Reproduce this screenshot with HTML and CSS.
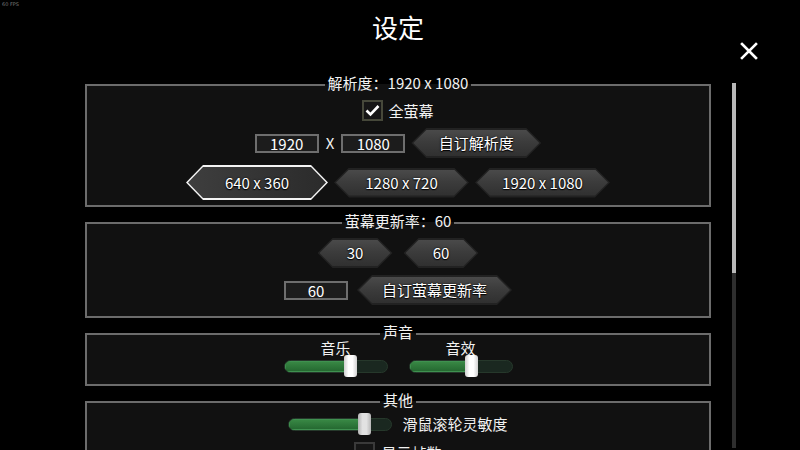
FILE: index.html
```html
<!DOCTYPE html>
<html lang="zh-CN">
<head>
<meta charset="utf-8">
<title>设定</title>
<link rel="stylesheet" href="styles.css">
</head>
<body>
<div class="fps">60 FPS</div>
<button class="close" aria-label="关闭">
  <svg width="18" height="18" viewBox="0 0 18 18"><path d="M2 2L16 16M16 2L2 16" stroke="#fff" stroke-width="2.6" stroke-linecap="square" fill="none"/></svg>
</button>
<div class="screen">
  <main class="column">
    <h1 class="title">设定</h1>

    <fieldset class="panel first">
      <legend>解析度：1920 x 1080</legend>
      <div class="body b-res">
        <div class="row g5">
          <span class="check"><svg width="17" height="17" viewBox="0 0 17 17"><path d="M2.5 8.5L6.5 12.5L14.5 4" stroke="#fff" stroke-width="2.6" fill="none"/></svg></span>
          <span class="label">全萤幕</span>
        </div>
        <div class="row g6">
          <span class="input">1920</span>
          <span class="x">X</span>
          <span class="input">1080</span>
          <span class="btn w130"><span>自订解析度</span></span>
        </div>
        <div class="row g6">
          <span class="btn sel w142"><span>640 x 360</span></span>
          <span class="btn w135"><span>1280 x 720</span></span>
          <span class="btn w135"><span>1920 x 1080</span></span>
        </div>
      </div>
    </fieldset>

    <fieldset class="panel">
      <legend>萤幕更新率：60</legend>
      <div class="body b-rate">
        <div class="row g11">
          <span class="btn w75"><span>30</span></span>
          <span class="btn w75"><span>60</span></span>
        </div>
        <div class="row g9">
          <span class="input">60</span>
          <span class="btn w155"><span>自订萤幕更新率</span></span>
        </div>
      </div>
    </fieldset>

    <fieldset class="panel">
      <legend>声音</legend>
      <div class="body b-sound">
        <div class="row g21 top">
          <div class="sgroup">
            <span class="slabel">音乐</span>
            <div class="slider" style="--v:64%"><div class="track"><div class="fill"></div></div><div class="knob"></div></div>
          </div>
          <div class="sgroup">
            <span class="slabel">音效</span>
            <div class="slider" style="--v:61%"><div class="track"><div class="fill"></div></div><div class="knob"></div></div>
          </div>
        </div>
      </div>
    </fieldset>

    <fieldset class="panel">
      <legend>其他</legend>
      <div class="body b-other">
        <div class="row g10">
          <div class="slider" style="--v:73%"><div class="track"><div class="fill"></div></div><div class="knob grey"></div></div>
          <span class="label">滑鼠滚轮灵敏度</span>
        </div>
        <div class="row g6">
          <span class="check dim"></span>
          <span class="label">显示帧数</span>
        </div>
      </div>
    </fieldset>
  </main>
  <div class="scrollbar"><div class="sthumb"></div></div>
</div>
</body>
</html>
```
FILE: styles.css
```css
* { box-sizing: border-box; }
html, body { margin: 0; padding: 0; background: #000; }
body {
  width: 800px;
  height: 450px;
  overflow: hidden;
  position: relative;
  font-family: "Noto Sans CJK SC", "Noto Sans", sans-serif;
  font-size: 15px;
  color: #f2f2f2;
}
.fps {
  position: absolute;
  left: 2px;
  top: 1px;
  font: 5px/6px "DejaVu Sans", sans-serif;
  color: #7a7a7a;
}
.close {
  position: absolute;
  left: 740px;
  top: 42px;
  width: 18px;
  height: 18px;
  padding: 0;
  border: 0;
  background: none;
}
.close svg { display: block; }

.screen {
  display: flex;
  align-items: flex-start;
  padding-left: 85px;
  gap: 21px;
}
.column {
  width: 626px;
  display: flex;
  flex-direction: column;
}
.title {
  margin: 0 0 30px;
  padding-top: 9px;
  font-size: 26px;
  line-height: 36px;
  font-weight: 400;
  text-align: center;
  color: #fff;
}

.panel {
  margin: 6px 0 0;
  padding: 0;
  min-width: 0;
  border: 2px solid #6c6c6c;
  background: #111;
}
.panel.first { margin-top: 0; }
.panel legend {
  margin: 0 auto;
  padding: 0 3px 4px;
  font-size: 15px;
  line-height: 16px;
  color: #f2f2f2;
}
.body {
  display: flex;
  flex-direction: column;
  align-items: center;
  gap: 7px;
}
.b-res { padding: 5px 0 5px; }
.b-rate { padding: 5px 0 11px; }
.b-sound { padding: 0 0 7px; }
.b-other { padding: 1px 0 0; }

.row { display: flex; align-items: center; justify-content: center; }
.row.top { align-items: flex-start; }
.g5 { gap: 5px; }
.g6 { gap: 6px; }
.g9 { gap: 9px; }
.g10 { gap: 10px; }
.g11 { gap: 11px; }
.g21 { gap: 21px; }

.label { line-height: 20px; }
.x { padding: 0 1px; line-height: 20px; }

.check {
  width: 21px;
  height: 21px;
  border: 2px solid #46483a;
  background: #161616;
  display: flex;
  align-items: center;
  justify-content: center;
}
.check.dim { border-color: #3a3a3a; }

.input {
  width: 64px;
  height: 19px;
  border: 2px solid #6e6e6e;
  background: #1c1c1c;
  display: flex;
  align-items: center;
  justify-content: center;
  line-height: 1;
  color: #fff;
}

.btn {
  --d: 15px;
  position: relative;
  height: 30px;
  display: flex;
  align-items: center;
  justify-content: center;
  background: #222;
  color: #fff;
  text-shadow: 0 0 2px #000, 0 1px 1px #000;
  clip-path: polygon(var(--d) 0, calc(100% - var(--d)) 0, 100% 50%, calc(100% - var(--d)) 100%, var(--d) 100%, 0 50%);
}
.btn::before {
  content: "";
  position: absolute;
  inset: 2px;
  background: linear-gradient(#4a4a4a, #3c3c3c 45%, #303030);
  clip-path: polygon(calc(var(--d) - 2px) 0, calc(100% - var(--d) + 2px) 0, 100% 50%, calc(100% - var(--d) + 2px) 100%, calc(var(--d) - 2px) 100%, 0 50%);
}
.btn > span { position: relative; line-height: 20px; }
.btn.sel {
  --d: 17px;
  height: 35px;
  background: #f4f4f4;
}
.btn.sel::before { background: linear-gradient(90deg, #3e3e3e, #2b2b2b); }
.w75 { width: 75px; }
.w130 { width: 130px; }
.w135 { width: 135px; }
.w142 { width: 142px; }
.w155 { width: 155px; }

.sgroup {
  display: flex;
  flex-direction: column;
  align-items: center;
}
.slabel {
  margin-top: -3px;
  line-height: 14px;
}
.slider {
  position: relative;
  width: 104px;
  height: 22px;
  display: flex;
  align-items: center;
}
.track {
  width: 100%;
  height: 13px;
  border-radius: 7px;
  border: 1px solid #26382b;
  background: #1a2820;
  overflow: hidden;
}
.fill {
  width: var(--v);
  height: 100%;
  background: linear-gradient(#3a8a46, #23662f);
  box-shadow: inset 0 0 0 1px #3f9150;
}
.knob {
  position: absolute;
  top: 0;
  left: calc(var(--v) - 6.5px);
  width: 13px;
  height: 22px;
  border-radius: 3px;
  background: linear-gradient(90deg, #cfcfcf, #fff 35%, #fff 65%, #d2d2d2);
}
.knob.grey { background: linear-gradient(90deg, #b5b5b5, #e2e2e2 35%, #e2e2e2 65%, #b8b8b8); }

.scrollbar {
  margin-top: 83px;
  width: 4px;
  height: 365px;
  background: #2e2e2e;
}
.sthumb {
  height: 190px;
  background: #b8b8b8;
}
```
